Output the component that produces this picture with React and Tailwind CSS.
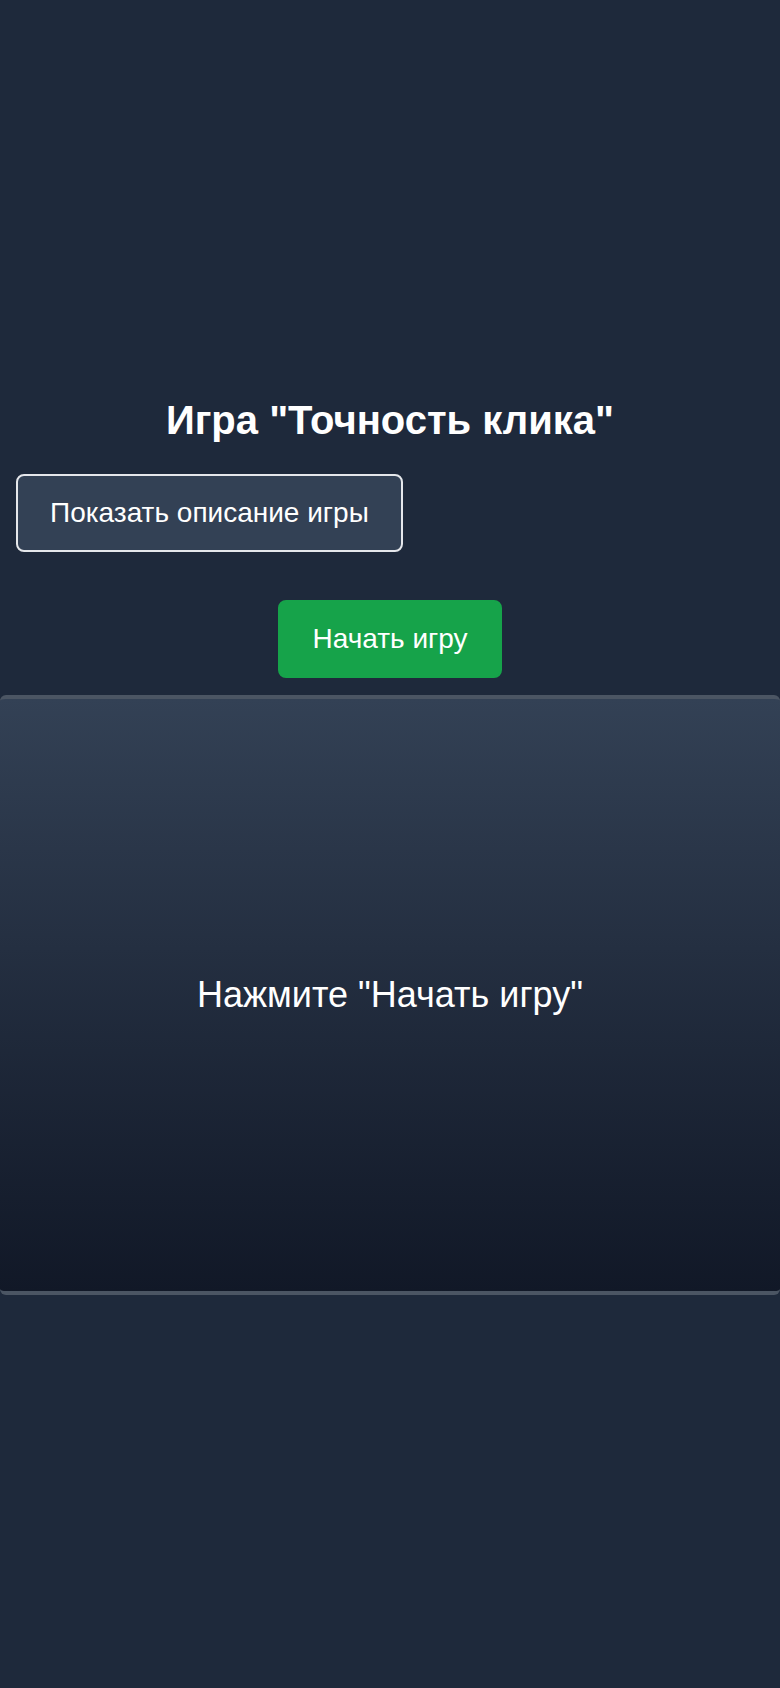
export default function App() {
  return (
    <div
      className="min-h-screen flex flex-col justify-center bg-[#1e293b] text-white"
      style={{ fontFamily: '"Liberation Sans", Arial, sans-serif' }}
    >
      {/* Title */}
      <h1 className="text-center text-[40px] leading-[54px] font-bold mb-[27px]">
        Игра "Точность клика"
      </h1>

      {/* Description toggle */}
      <button className="self-start ml-4 px-8 py-4 text-[28px] leading-[42px] bg-[#334155] border-2 border-gray-200 rounded-lg">
        Показать описание игры
      </button>

      {/* Start */}
      <button className="self-center mt-12 px-8 py-4 text-[28px] leading-[42px] bg-[#16a34a] border-2 border-[#16a34a] rounded-lg">
        Начать игру
      </button>

      {/* Game field */}
      <div className="mt-[17px] h-[600px] w-full flex items-center justify-center border-y-4 border-[#4b5563] rounded-md bg-gradient-to-b from-[#334155] to-[#111827]">
        <p className="text-[36px]">Нажмите "Начать игру"</p>
      </div>
    </div>
  );
}
